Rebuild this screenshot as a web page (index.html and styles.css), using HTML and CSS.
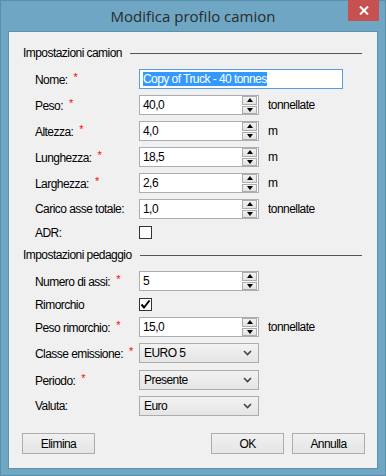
FILE: index.html
```html
<!DOCTYPE html>
<html lang="it">
<head>
    <meta charset="UTF-8">
    <meta name="viewport" content="width=device-width, initial-scale=1.0">
    <title>Modifica profilo camion</title>
    <link rel="stylesheet" href="styles.css">
</head>
<body>
    <div class="window">
        <div class="titlebar">
            <span class="title">Modifica profilo camion</span>
            <button class="close">
                <svg width="10" height="9" viewBox="0 0 10 9"><path d="M1 0.5 L9 8.5 M9 0.5 L1 8.5" stroke="#fff" stroke-width="2"/></svg>
            </button>
        </div>
        <div class="client">
            <div class="group">Impostazioni camion</div>

            <div class="row">
                <label>Nome:<i class="req">*</i></label>
                <div class="textbox focused"><span class="sel">Copy of Truck - 40 tonnes</span></div>
            </div>
            <div class="row">
                <label>Peso:<i class="req">*</i></label>
                <div class="spin"><span>40,0</span><div class="arrows"><b class="up"></b><b class="down"></b></div></div>
                <span class="unit">tonnellate</span>
            </div>
            <div class="row">
                <label>Altezza:<i class="req">*</i></label>
                <div class="spin"><span>4,0</span><div class="arrows"><b class="up"></b><b class="down"></b></div></div>
                <span class="unit">m</span>
            </div>
            <div class="row">
                <label>Lunghezza:<i class="req">*</i></label>
                <div class="spin"><span>18,5</span><div class="arrows"><b class="up"></b><b class="down"></b></div></div>
                <span class="unit">m</span>
            </div>
            <div class="row">
                <label>Larghezza:<i class="req">*</i></label>
                <div class="spin"><span>2,6</span><div class="arrows"><b class="up"></b><b class="down"></b></div></div>
                <span class="unit">m</span>
            </div>
            <div class="row">
                <label>Carico asse totale:</label>
                <div class="spin"><span>1,0</span><div class="arrows"><b class="up"></b><b class="down"></b></div></div>
                <span class="unit">tonnellate</span>
            </div>
            <div class="row check-row adr">
                <label>ADR:</label>
                <div class="checkbox"></div>
            </div>

            <div class="group second">Impostazioni pedaggio</div>

            <div class="row">
                <label>Numero di assi:<i class="req">*</i></label>
                <div class="spin"><span>5</span><div class="arrows"><b class="up"></b><b class="down"></b></div></div>
            </div>
            <div class="row check-row">
                <label>Rimorchio</label>
                <div class="checkbox">
                    <svg width="11" height="11" viewBox="0 0 11 11"><path d="M1.5 5.5 L4 8.5 L9.5 1.5" fill="none" stroke="#000" stroke-width="2"/></svg>
                </div>
            </div>
            <div class="row tight">
                <label>Peso rimorchio:<i class="req">*</i></label>
                <div class="spin"><span>15,0</span><div class="arrows"><b class="up"></b><b class="down"></b></div></div>
                <span class="unit">tonnellate</span>
            </div>
            <div class="row tight">
                <label>Classe emissione:<i class="req">*</i></label>
                <div class="combo"><span>EURO 5</span><svg width="9" height="6" viewBox="0 0 9 6"><path d="M1 1 L4.5 4.5 L8 1" fill="none" stroke="#444" stroke-width="1.6"/></svg></div>
            </div>
            <div class="row">
                <label>Periodo:<i class="req">*</i></label>
                <div class="combo"><span>Presente</span><svg width="9" height="6" viewBox="0 0 9 6"><path d="M1 1 L4.5 4.5 L8 1" fill="none" stroke="#444" stroke-width="1.6"/></svg></div>
            </div>
            <div class="row">
                <label>Valuta:</label>
                <div class="combo"><span>Euro</span><svg width="9" height="6" viewBox="0 0 9 6"><path d="M1 1 L4.5 4.5 L8 1" fill="none" stroke="#444" stroke-width="1.6"/></svg></div>
            </div>

            <div class="buttons">
                <button class="btn">Elimina</button>
                <div class="right">
                    <button class="btn">OK</button>
                    <button class="btn">Annulla</button>
                </div>
            </div>
        </div>
    </div>
</body>
</html>
```

FILE: styles.css
```css
body {
    margin: 0;
    padding: 0;
    font-family: "Liberation Sans", Arial, sans-serif;
    font-size: 12px;
    letter-spacing: -0.55px;
    color: #000;
}
.window {
    width: 386px;
    height: 476px;
    box-sizing: border-box;
    background: #6ea6c3;
    border: 1px solid #5a8fab;
    padding: 0 7px;
}
.titlebar {
    position: relative;
    height: 30px;
    text-align: center;
}
.title {
    display: inline-block;
    font-family: "Open Sans", sans-serif;
    font-size: 15px;
    letter-spacing: 0;
    line-height: 30px;
    color: #2b2b2b;
}
.close {
    position: absolute;
    top: -1px;
    right: -1px;
    width: 31px;
    height: 21px;
    border: none;
    padding: 0;
    background: #c75050;
    display: flex;
    align-items: center;
    justify-content: center;
}
.client {
    height: 438px;
    box-sizing: border-box;
    background: #f0f0f0;
    border: 1px solid #5c91ad;
    padding: 14px 0 0 0;
    display: flex;
    flex-direction: column;
}
.group {
    height: 14px;
    line-height: 14px;
    margin-left: 14px;
    margin-right: 15px;
    display: flex;
    align-items: center;
    gap: 8px;
    white-space: nowrap;
}
.group::after {
    content: "";
    flex: 1;
    height: 1px;
    background: #555;
}
.group.second {
    margin-top: 9px;
}
.row {
    height: 20px;
    display: flex;
    align-items: center;
    margin-top: 6px;
    padding-left: 26px;
}
.group + .row {
    margin-top: 9px;
}
.row label {
    width: 104px;
    flex: none;
    white-space: nowrap;
}
.req {
    font-style: normal;
    color: #f00;
    font-size: 11px;
    vertical-align: 3px;
    margin-left: 6px;
}
.check-row {
    height: 13px;
    margin-top: 7px;
}
.tight {
    margin-top: 6px;
}
.row.tight + .row:not(.tight) {
    margin-top: 7px;
}
.textbox, .spin, .combo {
    height: 20px;
    box-sizing: border-box;
    display: flex;
    align-items: center;
}
.textbox {
    width: 204px;
    border: 1px solid #569de5;
    background: #fff;
    padding-left: 3px;
}
.sel {
    background: #3399ff;
    color: #fff;
    line-height: 14px;
}
.spin {
    width: 120px;
    border: 1px solid #abadb3;
    background: #fff;
    padding-left: 3px;
    justify-content: space-between;
}
.arrows {
    width: 15px;
    height: 18px;
    display: flex;
    flex-direction: column;
    gap: 1px;
    margin-right: 1px;
}
.arrows b {
    flex: 1;
    box-sizing: border-box;
    border: 1px solid #acacac;
    background: linear-gradient(#f2f2f2, #e2e2e2);
    display: flex;
    align-items: center;
    justify-content: center;
}
.arrows b::before {
    content: "";
    width: 0;
    height: 0;
    border-left: 3.5px solid transparent;
    border-right: 3.5px solid transparent;
}
.arrows .up::before {
    border-bottom: 4px solid #000;
}
.arrows .down::before {
    border-top: 4px solid #000;
}
.unit {
    margin-left: 9px;
}
.checkbox {
    width: 13px;
    height: 13px;
    box-sizing: border-box;
    border: 1px solid #333;
    background: #fff;
    display: flex;
    align-items: center;
    justify-content: center;
}
.combo {
    width: 120px;
    border: 1px solid #acacac;
    background: linear-gradient(#f2f2f2, #e5e5e5);
    padding: 0 6px 0 4px;
    justify-content: space-between;
}
.buttons {
    margin-top: 17px;
    display: flex;
    justify-content: space-between;
    padding: 0 12px 0 13px;
}
.right {
    display: flex;
    gap: 8px;
}
.btn {
    width: 73px;
    height: 21px;
    border: 1px solid #adadad;
    background: linear-gradient(#f0f0f0, #e5e5e5);
    font-family: "Liberation Sans", Arial, sans-serif;
    font-size: 12px;
    letter-spacing: -0.55px;
    color: #000;
    padding: 0;
}
```
